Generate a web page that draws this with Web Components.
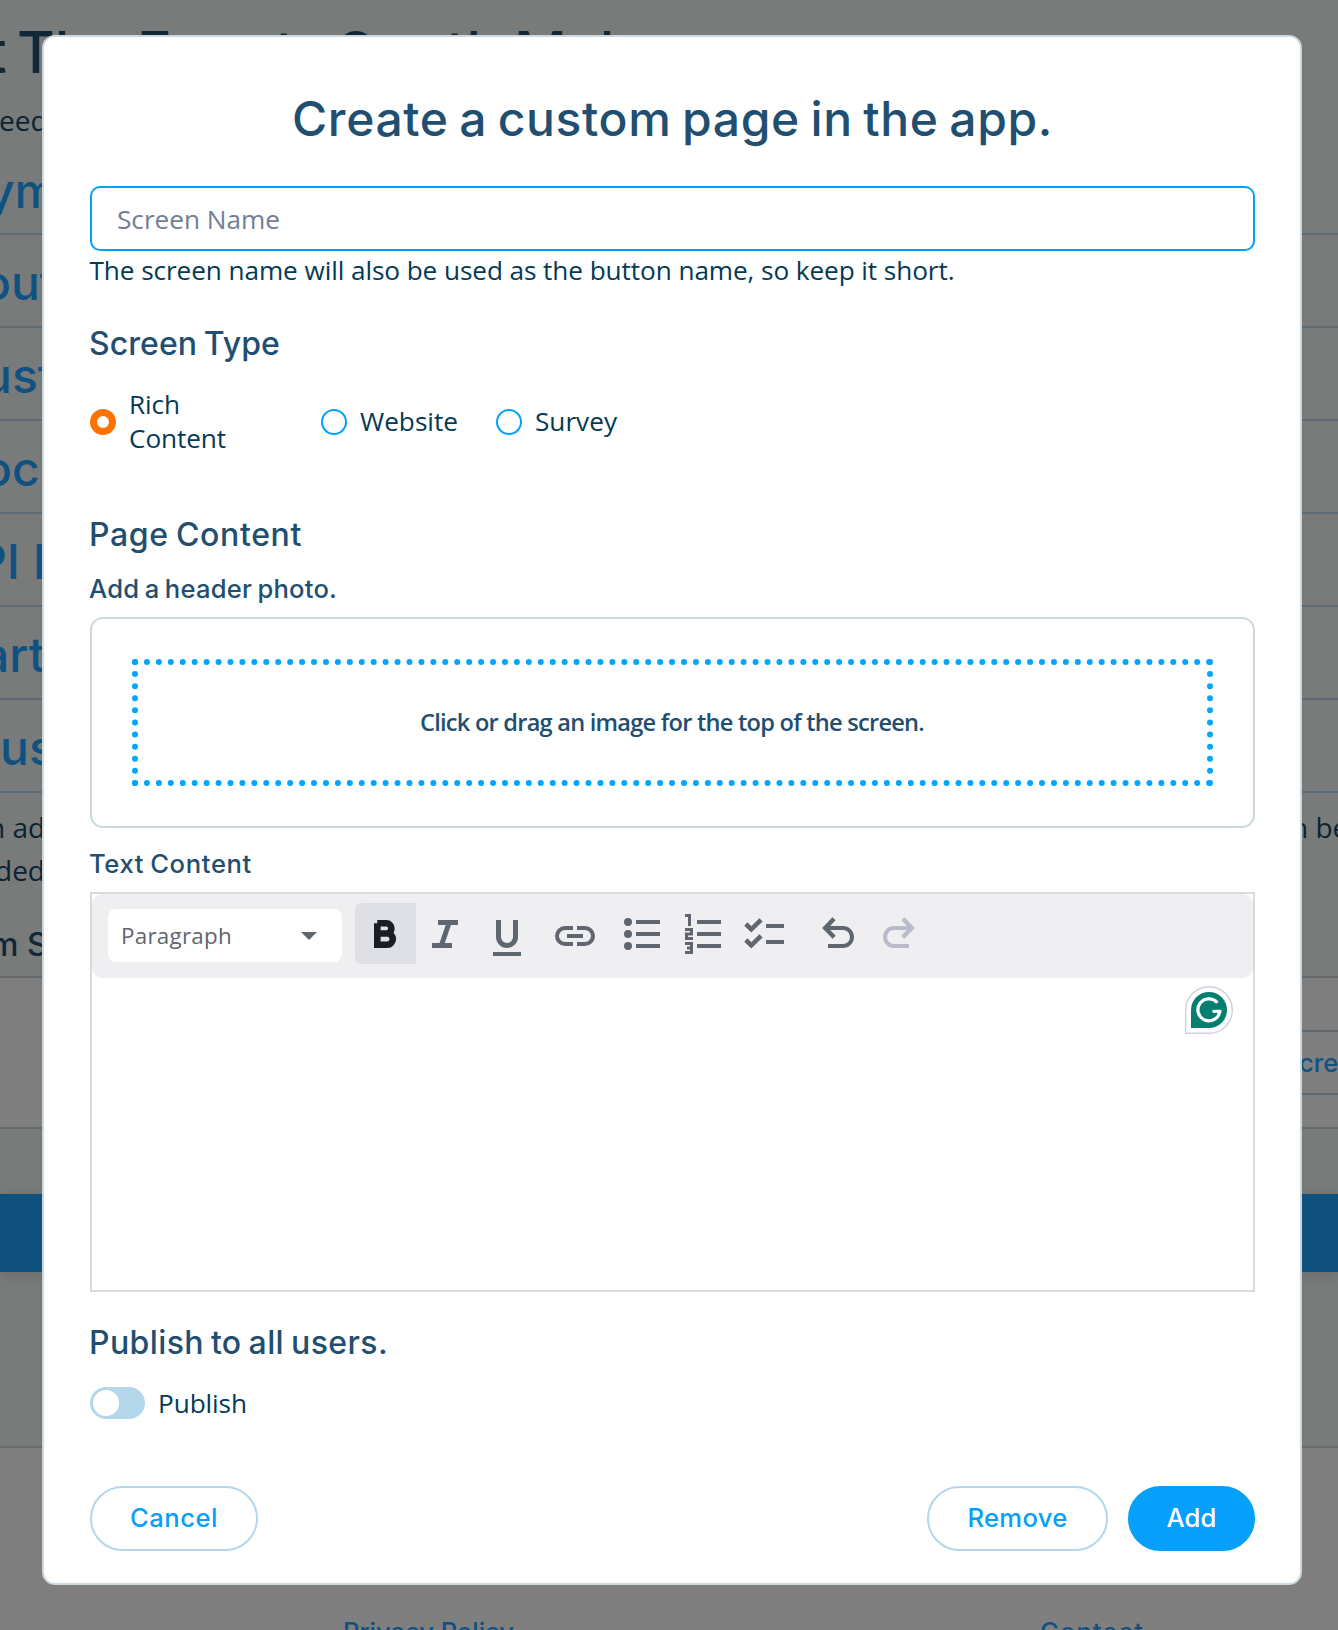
<!DOCTYPE html>
<html lang="en">
<head>
<meta charset="utf-8">
<title>Create a custom page</title>
<style>
html,body{margin:0;height:100%;overflow:hidden}
body{font-family:"Open Sans","Noto Sans",sans-serif;color:#053a54}
</style>
</head>
<body>
<app-screen></app-screen>
<script>
const HEAD = 'Inter,"Liberation Sans",sans-serif';

/* Single-line text that spreads its letters over a given width. */
class FitText extends HTMLElement {
  connectedCallback() {
    const root = this.attachShadow({mode:'open'});
    root.innerHTML = `<style>:host{display:inline-block;white-space:pre}span{display:inline-block}</style><span><slot></slot></span>`;
    const target = +this.getAttribute('w'), n = this.textContent.length;
    if (target) {
      const span = root.querySelector('span');
      const natural = span.getBoundingClientRect().width;
      span.style.letterSpacing = ((target - natural) / n) + 'px';
    }
  }
}

/* Heading in the display face: size, line height and width by attribute. */
class UiHeading extends HTMLElement {
  connectedCallback() {
    const a = k => this.getAttribute(k);
    this.attachShadow({mode:'open'}).innerHTML = `<style>
      :host{display:block;font:500 ${a('size')}px/${a('line')}px ${HEAD};color:#224e70;text-align:${a('align')||'left'};word-spacing:-.06em}
      :host(:not([align])){margin-left:-1px}
      </style><fit-text w="${a('w')}">${this.textContent}</fit-text>`;
  }
}

class TextField extends HTMLElement {
  connectedCallback() {
    this.attachShadow({mode:'open'}).innerHTML = `<style>
      :host{display:flex;align-items:center;box-sizing:border-box;height:65px;border:2px solid #00a0ff;border-radius:10px;padding:0 0 0 25px;font-size:26.2px;line-height:34px;color:#718096}
      </style><fit-text w="163">${this.getAttribute('placeholder')}</fit-text>`;
  }
}

class RadioOption extends HTMLElement {
  connectedCallback() {
    this.attachShadow({mode:'open'}).innerHTML = `<style>
      :host{display:flex;align-items:center;gap:13px;font-size:26.2px;line-height:34px}
      i{box-sizing:border-box;width:26px;height:26px;border-radius:50%;border:2px solid #069ffa;flex:none}
      :host([checked]) i{border:7px solid #ff7200}
      div{padding-bottom:2px}
      </style><i></i><div><slot></slot></div>`;
  }
}

class DropZone extends HTMLElement {
  connectedCallback() {
    this.attachShadow({mode:'open'}).innerHTML = `<style>
      :host{display:flex;box-sizing:border-box;height:211px;padding:40px;border:2px solid #cbd8df;border-radius:13px}
      div{flex:1;display:flex;align-items:center;justify-content:center;padding:0 1px 2px 0;border:6px dotted #00a6ff;font:600 23.6px/30px "Open Sans",sans-serif;color:#224e70}
      </style><div><fit-text w="504">${this.textContent}</fit-text></div>`;
  }
}

const ICONS = {
  bold:'<path stroke-width="6.6" d="M22.3 20.3h9a5.1 5.1 0 0 1 0 10.2H22M30 30.5h2.2a5.6 5.6 0 0 1 0 11.2H22.3V20.3"/>',
  italic:'<path stroke-width="5" d="M22 19.5h20M16 42.5h20M33 20l-7.5 22"/>',
  underline:'<path stroke-width="5" d="M21.5 17v17a8.5 8.5 0 0 0 17 0V17"/><path stroke-width="4" d="M16 51h28"/>',
  link:'<path d="M28 25H20a8 8 0 0 0 0 16h8M32 25h8a8 8 0 0 1 0 16h-8M22 33h16"/>',
  bullets:'<g fill="currentColor" stroke="none"><circle cx="16" cy="19" r="4"/><circle cx="16" cy="31" r="4"/><circle cx="16" cy="43" r="4"/></g><path d="M24 19h24M24 31h24M24 43h24"/>',
  numbers:'<path stroke-width="3" d="M12 12.5h4.5V23M12 26.5h6.5v4.4h-5v4.6H20M12 40.5h6.5v9H12M14 45h4.5"/><path d="M24 19h24M24 31h24M24 43h24"/>',
  checks:'<path stroke-width="4.6" d="M11.8 21l5.5 5.3L27 16.8M11.8 37l5.5 5.3L27 32.8"/><path d="M32 23h18M32 39h18"/>',
  undo:'<path stroke-width="4.4" d="M26 15.8L17.2 25l9 9.2"/><path d="M17 25h18a9 9 0 0 1 0 18H20"/>',
  redo:'<g transform="translate(60 0) scale(-1 1)"><path stroke-width="4.4" d="M26 15.8L17.2 25l9 9.2"/><path d="M17 25h18a9 9 0 0 1 0 18H20"/></g>'
};
class ToolButton extends HTMLElement {
  connectedCallback() {
    this.attachShadow({mode:'open'}).innerHTML = `<style>
      :host{display:block;width:61px;height:61px;color:#60666f;flex:none}
      :host([active]){background:#dfe0e6;color:#1b1d22;border-radius:6px 0 0 6px}
      :host([disabled]){color:#b9bbc8}
      svg{display:block}
      </style><svg width="61" height="61" viewBox="0 0 61 61" fill="none" stroke="currentColor" stroke-width="4">${ICONS[this.getAttribute('icon')]}</svg>`;
  }
}

class RichEditor extends HTMLElement {
  connectedCallback() {
    this.attachShadow({mode:'open'}).innerHTML = `<style>
      :host{display:block;box-sizing:border-box;height:400px;border:2px solid #d8d9db;position:relative}
      .bar{display:flex;align-items:center;box-sizing:border-box;height:84px;padding:0 16px;background:#efeff1;border-radius:10px}
      .select{display:flex;align-items:center;justify-content:space-between;box-sizing:border-box;width:234px;height:53px;margin:-1px 13px 0 0;padding:0 25px 0 13px;background:#fff;border-radius:8px;font-size:22.4px;line-height:30px;color:#60656e}
      .group{display:flex;margin-top:-5px}
      .select svg{display:block}
      .assist{position:absolute;right:20px;top:92px}
      </style>
      <div class="bar">
        <div class="select"><fit-text w="111">Paragraph</fit-text><svg width="16" height="8"><path d="M0 0h16L8 8z" fill="#60666f"/></svg></div>
        <div class="group"><tool-button icon="bold" active></tool-button><tool-button icon="italic"></tool-button><tool-button icon="underline"></tool-button></div>
        <div class="group" style="margin-left:7px"><tool-button icon="link"></tool-button></div>
        <div class="group" style="margin-left:6px"><tool-button icon="bullets"></tool-button><tool-button icon="numbers"></tool-button><tool-button icon="checks"></tool-button></div>
        <div class="group" style="margin-left:13px"><tool-button icon="undo"></tool-button><tool-button icon="redo" disabled></tool-button></div>
      </div>
      <svg class="assist" width="48" height="48" viewBox="0 0 48 48" fill="none">
        <path d="M.7 47.3V24a23.3 23.3 0 1 1 23.3 23.3z" fill="#fff" stroke="#cfd1de" stroke-width="1.4"/>
        <path d="M6 42V24a18 18 0 1 1 18 18z" fill="#047f6f"/>
        <path d="M32.4 16.8A11 11 0 1 0 34.8 25.4" stroke="#fff" stroke-width="3.2"/>
        <path d="M27.5 25.3h8.9" stroke="#fff" stroke-width="3"/>
      </svg>`;
  }
}

class ToggleSwitch extends HTMLElement {
  connectedCallback() {
    this.attachShadow({mode:'open'}).innerHTML = `<style>
      :host{display:flex;align-items:center;gap:13px;height:32px;font-size:26.2px;line-height:32px}
      b{box-sizing:border-box;width:55px;height:32px;border-radius:16px;background:#b4d7ea;padding:3px}
      b::before{content:"";display:block;width:26px;height:26px;border-radius:50%;background:#fff}
      fit-text{margin-top:-1px}
      </style><b></b><fit-text w="89">${this.textContent}</fit-text>`;
  }
}

class PillButton extends HTMLElement {
  connectedCallback() {
    this.attachShadow({mode:'open'}).innerHTML = `<style>
      :host{display:flex;align-items:center;justify-content:center;box-sizing:border-box;height:65px;width:${this.getAttribute('width')}px;border:2px solid #b4d7ea;border-radius:33px;padding-bottom:2px;font:500 25.6px/34px ${HEAD};color:#069ffa}
      :host([primary]){background:#069ffa;border-color:#069ffa;color:#fff}
      </style><fit-text w="${this.getAttribute('w')}">${this.textContent}</fit-text>`;
  }
}

class PageDialog extends HTMLElement {
  connectedCallback() {
    this.attachShadow({mode:'open'}).innerHTML = `<style>
      :host{display:flex;flex-direction:column;box-sizing:border-box;width:1260px;height:1550px;border:2px solid #cbd8df;border-radius:13px;background:#fff;padding:52px 45px 0 46px;font-size:26.2px;line-height:34px}
      .help{height:35px;margin:2px 0 0 -.5px}
      .radios{display:flex;align-items:center;margin-top:24px;height:68px}
      .actions{display:flex;margin-top:67px}
      .actions :first-child{margin-right:auto}
      .actions :nth-child(2){margin-right:20px}
      </style>
      <ui-heading size="48" line="60" w="761" align="center">Create a custom page in the app.</ui-heading>
      <text-field placeholder="Screen Name" style="margin-top:37px"></text-field>
      <div class="help"><fit-text w="865">The screen name will also be used as the button name, so keep it short.</fit-text></div>
      <ui-heading size="32" line="40" w="191" style="margin-top:36px">Screen Type</ui-heading>
      <div class="radios">
        <radio-option checked style="width:231px"><fit-text w="51">Rich</fit-text><br><fit-text w="97">Content</fit-text></radio-option>
        <radio-option style="width:175px"><fit-text w="98">Website</fit-text></radio-option>
        <radio-option><fit-text w="82">Survey</fit-text></radio-option>
      </div>
      <ui-heading size="32" line="40" w="213" style="margin-top:59px">Page Content</ui-heading>
      <ui-heading size="25.6" line="34" w="248" style="margin-top:17px">Add a header photo.</ui-heading>
      <drop-zone style="margin-top:11px">Click or drag an image for the top of the screen.</drop-zone>
      <ui-heading size="25.6" line="34" w="163" style="margin-top:19px">Text Content</ui-heading>
      <rich-editor style="margin-top:11px"></rich-editor>
      <ui-heading size="32" line="40" w="299" style="margin-top:31px">Publish to all users.</ui-heading>
      <toggle-switch style="margin-top:24px">Publish</toggle-switch>
      <div class="actions">
        <pill-button width="168" w="88">Cancel</pill-button>
        <pill-button width="181" w="100">Remove</pill-button>
        <pill-button width="127" w="50" primary>Add</pill-button>
      </div>`;
  }
}

/* The dimmed page that lies behind the dialog. */
class PageBackdrop extends HTMLElement {
  connectedCallback() {
    const rows = ['ym','out','ust','ock','PI I','art','us'];
    const shift = [-13,-18,-17,-17,-24,-18,0];
    this.attachShadow({mode:'open'}).innerHTML = `<style>
      :host{display:flex;flex-direction:column;height:1630px;overflow:hidden;background:#797b7a;white-space:pre}
      .title{display:flex;height:90px;font:500 58px/58px ${HEAD};color:#102738;padding-top:3px;box-sizing:border-box;flex:none}
      .title span{margin-top:20px}
      .lead{height:62px;font-size:28px;line-height:51px;color:#0a2332;padding-top:5px;text-indent:-1px}
      .row{box-sizing:border-box;height:93px;border-bottom:2px solid #5c6a76;font:500 48px/91px ${HEAD};color:#0f5180;padding-top:2px;flex:none}
      .row.first{height:78px;line-height:68px;padding:0}
      .para{display:flex;line-height:43px;font-size:28px;color:#0a2332;height:43px}
      .para span{flex:none}
      .sub{box-sizing:border-box;height:71px;font:500 32px/82px ${HEAD};color:#102738;margin-top:12px;flex:none}
      .panel{background:#7f7f7f;border:solid #66696c;border-width:2px 0;height:153px;box-sizing:border-box;flex:none;display:flex;justify-content:flex-end}
      .panel div{box-sizing:border-box;width:338px;height:65px;border:solid #5c6a76;border-width:2px 0;margin-top:52px;font:500 25.6px/61px ${HEAD};color:#0f5180;padding-left:299px}
      .bar{height:78px;background:#0f507d;margin-top:65px;box-shadow:0 3px 14px rgba(0,0,0,.12);flex:none}
      .foot{flex:none;box-sizing:border-box;height:184px;margin-top:174px;background:#7f7f7f;border-top:2px solid #6a6c6b;display:flex;padding:167px 0 0 343px;gap:526px;font:500 25.6px/34px ${HEAD};color:#0f5180}
      .foot fit-text{flex:none}
      </style>
      <div class="title"><span style="width:17px;text-indent:-13px">t</span><span style="width:120px">The</span><span style="width:200px"><fit-text w="190">Events</fit-text></span><span style="width:177px"><fit-text w="165">South</fit-text></span><span><fit-text w="118">Mak</fit-text></span></div>
      <div class="lead"><span>eed</span></div>
      ${rows.map((t,i)=>`<div class="row ${i?'':'first'}" style="text-indent:${shift[i]}px">${t}</div>`).join('')}
      <div class="para" style="margin-top:13px"><span style="width:1291px;text-indent:-12px">n ad</span><span>n be</span></div>
      <div class="para"><span style="text-indent:-5px">ded</span></div>
      <div class="sub" style="text-indent:-10px">m S</div>
      <div class="panel" style="margin-top:1px"><div>cre</div></div>
      <div class="bar"></div>
      <div class="foot"><fit-text w="171">Privacy Policy</fit-text><fit-text w="104">Contact</fit-text></div>`;
  }
}

class AppScreen extends HTMLElement {
  connectedCallback() {
    this.attachShadow({mode:'open'}).innerHTML = `<style>
      :host{display:block;position:relative;width:1338px;height:1630px;overflow:hidden}
      page-dialog{position:absolute;left:42px;top:35px}
      </style><page-backdrop></page-backdrop><page-dialog></page-dialog>`;
  }
}

for (const [name, cls] of Object.entries({
  'fit-text':FitText,'ui-heading':UiHeading,'text-field':TextField,'radio-option':RadioOption,
  'drop-zone':DropZone,'tool-button':ToolButton,'rich-editor':RichEditor,'toggle-switch':ToggleSwitch,
  'pill-button':PillButton,'page-dialog':PageDialog,'page-backdrop':PageBackdrop,'app-screen':AppScreen
})) customElements.define(name, cls);
</script>
</body>
</html>
